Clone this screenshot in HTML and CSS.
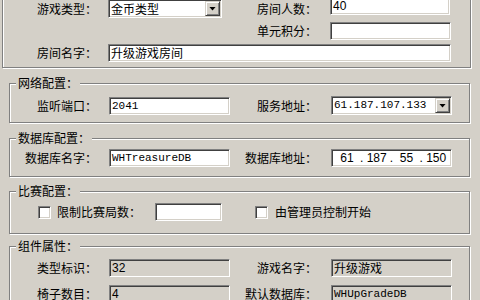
FILE: index.html
```html
<!DOCTYPE html>
<html lang="zh-CN">
<head>
  <meta charset="UTF-8" />
  <title>房间配置</title>
  <link rel="stylesheet" href="styles.css">
</head>
<body>
  <div class="dialog">
    <!-- 房间信息 -->
    <div class="group group-room">
      <div class="form-grid">
        <label class="lbl">游戏类型：</label>
        <div class="combo combo-type"><span class="combo-text cjk">金币类型</span><span class="drop-btn"></span></div>
        <label class="lbl lbl-r">房间人数：</label>
        <div class="edit edit-top">40</div>

        <label class="lbl lbl-r">单元积分：</label>
        <div class="edit"></div>

        <label class="lbl">房间名字：</label>
        <div class="edit cjk edit-wide">升级游戏房间</div>
      </div>
    </div>

    <!-- 网络配置 -->
    <div class="group group-net">
      <div class="group-title">网络配置：</div>
      <div class="form-grid">
        <label class="lbl">监听端口：</label>
        <div class="edit mono">2041</div>
        <label class="lbl lbl-r">服务地址：</label>
        <div class="combo"><span class="combo-text mono">61.187.107.133</span><span class="drop-btn"></span></div>
      </div>
    </div>

    <!-- 数据库配置 -->
    <div class="group group-db">
      <div class="group-title">数据库配置：</div>
      <div class="form-grid">
        <label class="lbl">数据库名字：</label>
        <div class="edit mono">WHTreasureDB</div>
        <label class="lbl lbl-r">数据库地址：</label>
        <div class="edit ip"><span>61</span><i>.</i><span>187</span><i>.</i><span>55</span><i>.</i><span>150</span></div>
      </div>
    </div>

    <!-- 比赛配置 -->
    <div class="group group-match">
      <div class="group-title">比赛配置：</div>
      <div class="check-row">
        <span class="check"></span>
        <label class="check-lbl">限制比赛局数：</label>
        <div class="edit edit-count"></div>
        <span class="check check-2"></span>
        <label class="check-lbl">由管理员控制开始</label>
      </div>
    </div>

    <!-- 组件属性 -->
    <div class="group group-comp">
      <div class="group-title">组件属性：</div>
      <div class="form-grid">
        <label class="lbl">类型标识：</label>
        <div class="edit off">32</div>
        <label class="lbl lbl-r">游戏名字：</label>
        <div class="edit off cjk">升级游戏</div>

        <label class="lbl">椅子数目：</label>
        <div class="edit off">4</div>
        <label class="lbl lbl-r">默认数据库：</label>
        <div class="edit off mono">WHUpGradeDB</div>
      </div>
    </div>
  </div>
</body>
</html>
```

FILE: styles.css
```css
/* Reset & Base */
*, *::before, *::after { box-sizing: border-box; margin: 0; padding: 0; }
html, body { height: 100%; overflow: hidden; background: #d4d0c8; color: #000; font-family: "Noto Sans CJK SC", "Liberation Sans", sans-serif; font-size: 12px; }
.dialog { display: flex; flex-direction: column; }

/* Group boxes (etched) */
.group { border: 1px solid #808080; box-shadow: inset 1px 1px 0 #fff, 1px 1px 0 #fff; margin: 15px 10px 0 9px; }
.group-title { display: table; height: 16px; line-height: 16px; margin: -9px 0 0 6px; padding: 0 2px; background: #d4d0c8; white-space: nowrap; }

.group-room { margin: -2px 9px 0 2px; padding-bottom: 5px; }
.group-net .form-grid { padding: 5px 0 7px; }
.group-db { margin-top: 15px; }
.group-db .form-grid { padding: 2px 0 9px; }
.group-match { margin-top: 14px; }
.group-comp { margin-top: 12px; }
.group-comp .form-grid { padding: 4px 0 10px; row-gap: 7px; }

/* Form rows */
.form-grid { display: grid; grid-template-columns: 99px 121px 101px 121px; grid-auto-rows: 19px; align-items: center; }
.group-room .form-grid { grid-template-columns: 105px 121px 101px 121px; row-gap: 3px; }
.lbl { text-align: right; padding-right: 12px; line-height: 16px; white-space: nowrap; }
.lbl-r { grid-column: 3; padding-right: 14px; }
.group-room .lbl { padding-right: 11px; }
.group-room .lbl-r { padding-right: 13px; }

/* Sunken edit */
.edit {
  height: 18px;
  padding: 0 2px;
  background: #fff;
  border: 1px solid;
  border-color: #808080 #fff #fff #808080;
  box-shadow: inset 1px 1px 0 #404040, inset -1px -1px 0 #d4d0c8;
  font-family: "Liberation Sans", sans-serif;
  font-size: 12px;
  line-height: 16px;
  white-space: nowrap;
  overflow: hidden;
}
.edit.off { background: #d4d0c8; }
.cjk { font-family: "Noto Sans CJK SC", sans-serif; font-size: 12px; }
.mono { font-family: "Liberation Mono", monospace; font-size: 11px; }
.edit-top { align-self: start; margin-top: -2px; width: 120px; padding-top: 1px; line-height: 15px; }
.edit-wide { grid-column: 2 / 5; }

/* IP address box */
.ip { display: flex; }
.ip span { width: 26px; text-align: center; }
.ip i { width: 4px; font-style: normal; text-align: center; }

/* Combo box */
.combo {
  display: flex;
  align-items: center;
  height: 19px;
  padding: 1px;
  background: #fff;
  border: 1px solid;
  border-color: #808080 #fff #fff #808080;
  box-shadow: inset 1px 1px 0 #404040, inset -1px -1px 0 #d4d0c8;
}
.combo-type { width: 114px; }
.combo-text { flex: 1; padding-left: 1px; line-height: 15px; white-space: nowrap; overflow: hidden; }
.drop-btn {
  width: 15px;
  height: 15px;
  display: flex;
  align-items: center;
  justify-content: center;
  background: #d4d0c8;
  border: 1px solid;
  border-color: #d4d0c8 #404040 #404040 #d4d0c8;
  box-shadow: inset 1px 1px 0 #fff, inset -1px -1px 0 #808080;
}
.drop-btn::after { content: ""; width: 7px; height: 4px; background: #000; clip-path: polygon(0 0, 100% 0, 50% 100%); }

/* Checkbox row */
.check-row { display: flex; align-items: center; padding: 4px 0 12px 28px; }
.check {
  width: 13px;
  height: 13px;
  flex-shrink: 0;
  background: #fff;
  border: 1px solid;
  border-color: #808080 #fff #fff #808080;
  box-shadow: inset 1px 1px 0 #404040, inset -1px -1px 0 #d4d0c8;
}
.check-lbl { margin-left: 6px; line-height: 16px; white-space: nowrap; }
.edit-count { width: 67px; margin-left: 14px; }
.check-2 { margin-left: 33px; }
.check-2 + .check-lbl { margin-left: 7px; }
```
